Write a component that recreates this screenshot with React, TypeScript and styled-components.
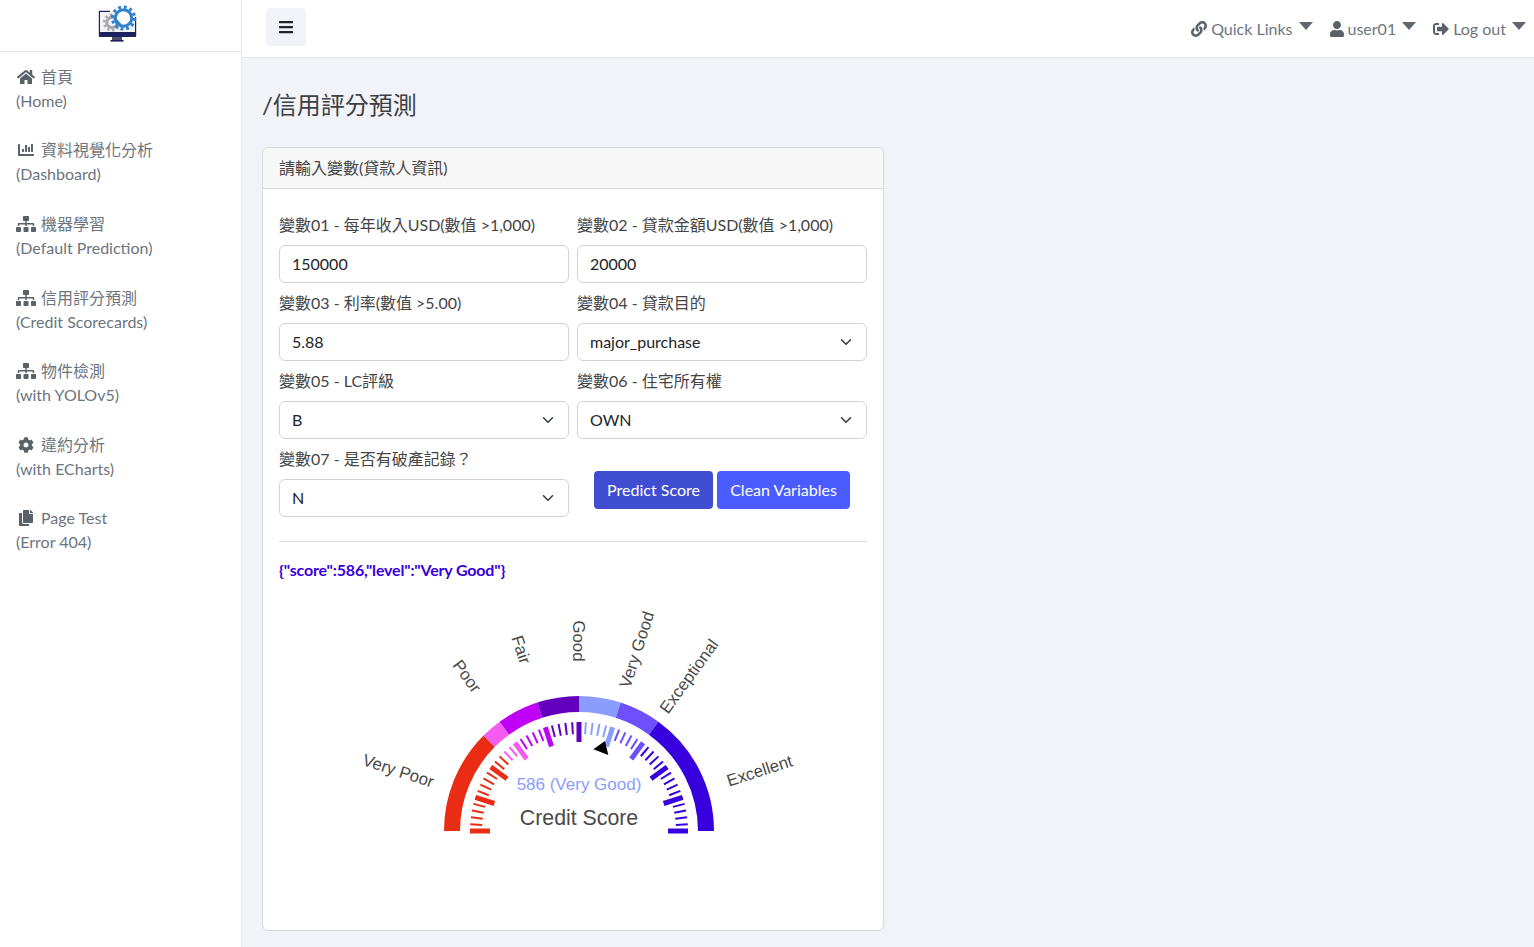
import React from "react";
import styled, { createGlobalStyle } from "styled-components";
import {
    FaBars,
    FaChartBar,
    FaCog,
    FaCopy,
    FaHome,
    FaLink,
    FaSignOutAlt,
    FaSitemap,
    FaUser,
} from "react-icons/fa";

const GlobalStyle = createGlobalStyle`
    * {
        box-sizing: border-box;
    }
    html, body {
        margin: 0;
        padding: 0;
        overflow: hidden;
    }
    body {
        background: #f1f3f9;
        color: #444;
        font-family: Lato, "Noto Sans CJK TC", sans-serif;
        font-size: 16px;
        line-height: 24px;
    }
`;

const navItems = [
    { icon: <FaHome />, title: "首頁", sub: "(Home)" },
    { icon: <FaChartBar />, title: "資料視覺化分析", sub: "(Dashboard)" },
    { icon: <FaSitemap />, title: "機器學習", sub: "(Default Prediction)" },
    { icon: <FaSitemap />, title: "信用評分預測", sub: "(Credit Scorecards)" },
    { icon: <FaSitemap />, title: "物件檢測", sub: "(with YOLOv5)" },
    { icon: <FaCog />, title: "違約分析", sub: "(with ECharts)" },
    { icon: <FaCopy />, title: "Page Test", sub: "(Error 404)" },
];

// gauge segments: upper end as share of the half circle, and its colour
const segments = [
    { stop: 0.25, color: "#ea2c14" },
    { stop: 0.3, color: "#f45cf2" },
    { stop: 0.4, color: "#c000f6" },
    { stop: 0.5, color: "#6200bd" },
    { stop: 0.6, color: "#8a9dfc" },
    { stop: 0.7, color: "#6d50fb" },
    { stop: 1, color: "#3700dd" },
];

const gaugeLabels = [
    { text: "Very Poor", x: 119, y: 182, angle: 18 },
    { text: "Poor", x: 187, y: 87, angle: 54 },
    { text: "Fair", x: 241, y: 60, angle: 72 },
    { text: "Good", x: 298, y: 51, angle: 90 },
    { text: "Very Good", x: 359, y: 60, angle: -72 },
    { text: "Exceptional", x: 411, y: 87, angle: -54 },
    { text: "Excellent", x: 481, y: 182, angle: -18 },
];

const CX = 300;
const CY = 241;

const polar = (share: number, radius: number) => {
    const a = Math.PI * (1 - share);
    return { x: CX + radius * Math.cos(a), y: CY - radius * Math.sin(a) };
};

const arcPath = (from: number, to: number, outer: number, inner: number) => {
    const a = polar(from, outer);
    const b = polar(to, outer);
    const c = polar(to, inner);
    const d = polar(from, inner);
    return `M${a.x} ${a.y}A${outer} ${outer} 0 0 1 ${b.x} ${b.y}L${c.x} ${c.y}A${inner} ${inner} 0 0 0 ${d.x} ${d.y}Z`;
};

const colorAt = (share: number) =>
    segments.find((s) => share <= s.stop + 0.0001)?.color ?? "#3700dd";

const Gauge: React.FC = () => {
    const ticks = Array.from({ length: 51 }, (_, i) => i);

    return (
        <GaugeSvg viewBox='0 0 588 325'>
            {segments.map((s, i) => (
                <path
                    key={s.color}
                    d={arcPath(i === 0 ? 0 : segments[i - 1].stop, s.stop, 135, 119)}
                    fill={s.color}
                />
            ))}
            {ticks.map((i) => {
                const share = i / 50;
                const major = i % 5 === 0;
                const a = polar(share, 109);
                const b = polar(share, major ? 89 : 97);
                return (
                    <line
                        key={i}
                        x1={a.x}
                        y1={a.y}
                        x2={b.x}
                        y2={b.y}
                        stroke={colorAt(share)}
                        strokeWidth={major ? 5 : 2}
                    />
                );
            })}
            <polygon points='326,151 314.3,159.3 329.3,165' fill='#000' />
            {gaugeLabels.map((l) => (
                <GaugeLabel
                    key={l.text}
                    transform={`translate(${l.x} ${l.y}) rotate(${l.angle})`}
                >
                    {l.text}
                </GaugeLabel>
            ))}
            <GaugeValue x={CX} y={200}>
                586 (Very Good)
            </GaugeValue>
            <GaugeTitle x={CX} y={235}>
                Credit Score
            </GaugeTitle>
        </GaugeSvg>
    );
};

const Logo: React.FC = () => (
    <svg width='40' height='40' viewBox='0 0 40 40'>
        <path d='M2.5 33V8.5H13M38.5 14V33' fill='none' stroke='#1c2260' strokeWidth='1.4' />
        <rect x='3' y='9' width='35' height='21' fill='#f3f3f6' />
        <rect x='2' y='29' width='37' height='5' fill='#1c2260' />
        <rect x='15' y='34' width='10' height='3' fill='#4a4f68' />
        <rect x='13.5' y='37' width='13' height='1.6' fill='#1c2260' />
        <circle cx='15' cy='19.5' r='5.2' fill='none' stroke='#a8a8ac' strokeWidth='3.2' />
        <circle cx='15' cy='19.5' r='7.8' fill='none' stroke='#a8a8ac' strokeWidth='2.6' strokeDasharray='2.4 2.5' />
        <circle cx='26.5' cy='15' r='8.2' fill='#fff' />
        <circle cx='26.5' cy='15' r='8.2' fill='none' stroke='#2e80cc' strokeWidth='3' />
        <circle cx='26.5' cy='15' r='11' fill='none' stroke='#2e80cc' strokeWidth='3.2' strokeDasharray='2.9 2.86' />
        <path d='M18 16c2 1 3 4 6 6' fill='none' stroke='#2e80cc' strokeWidth='2' />
    </svg>
);

const App: React.FC = () => (
    <Page>
        <GlobalStyle />
        <Sidebar>
            <Brand>
                <Logo />
            </Brand>
            <NavList>
                {navItems.map((item) => (
                    <NavItem key={item.sub}>
                        <NavTitle>
                            <NavIcon>{item.icon}</NavIcon>
                            {item.title}
                        </NavTitle>
                        <span>{item.sub}</span>
                    </NavItem>
                ))}
            </NavList>
        </Sidebar>
        <Main>
            <Topbar>
                <MenuButton>
                    <FaBars />
                </MenuButton>
                <TopLinks>
                    <TopLink>
                        <TopIcon $width={16}>
                            <FaLink />
                        </TopIcon>
                        Quick Links
                        <Caret />
                    </TopLink>
                    <TopLink>
                        <TopIcon $width={14}>
                            <FaUser />
                        </TopIcon>
                        user01
                        <Caret />
                    </TopLink>
                    <TopLink>
                        <TopIcon $width={16}>
                            <FaSignOutAlt />
                        </TopIcon>
                        Log out
                        <Caret />
                    </TopLink>
                </TopLinks>
            </Topbar>
            <Content>
                <PageTitle>/信用評分預測</PageTitle>
                <Card>
                    <CardHeader>請輸入變數(貸款人資訊)</CardHeader>
                    <CardBody>
                        <FormGrid>
                            <Field>
                                <Label>變數01 - 每年收入USD(數值 &gt;1,000)</Label>
                                <Input defaultValue='150000' />
                            </Field>
                            <Field>
                                <Label>變數02 - 貸款金額USD(數值 &gt;1,000)</Label>
                                <Input defaultValue='20000' />
                            </Field>
                            <Field>
                                <Label>變數03 - 利率(數值 &gt;5.00)</Label>
                                <Input defaultValue='5.88' />
                            </Field>
                            <Field>
                                <Label>變數04 - 貸款目的</Label>
                                <Select defaultValue='major_purchase'>
                                    <option>major_purchase</option>
                                </Select>
                            </Field>
                            <Field>
                                <Label>變數05 - LC評級</Label>
                                <Select defaultValue='B'>
                                    <option>B</option>
                                </Select>
                            </Field>
                            <Field>
                                <Label>變數06 - 住宅所有權</Label>
                                <Select defaultValue='OWN'>
                                    <option>OWN</option>
                                </Select>
                            </Field>
                            <Field>
                                <Label>變數07 - 是否有破產記錄？</Label>
                                <Select defaultValue='N'>
                                    <option>N</option>
                                </Select>
                            </Field>
                            <Actions>
                                <Button $dark>Predict Score</Button>
                                <Button>Clean Variables</Button>
                            </Actions>
                        </FormGrid>
                        <Divider />
                        <ResultText>{'{"score":586,"level":"Very Good"}'}</ResultText>
                        <Gauge />
                    </CardBody>
                </Card>
            </Content>
        </Main>
    </Page>
);

export default App;

const Page = styled.div`
    display: flex;
    height: 947px;
    overflow: hidden;
`;

const Sidebar = styled.aside`
    flex: 0 0 242px;
    background: #fff;
    border-right: 1px solid #e3e6ee;
`;

const Brand = styled.div`
    height: 52px;
    display: flex;
    justify-content: center;
    align-items: flex-start;
    padding-top: 3px;
    padding-right: 8px;
    border-bottom: 1px solid #e3e6ee;
`;

const NavList = styled.nav`
    display: flex;
    flex-direction: column;
    padding-top: 13px;
`;

const NavItem = styled.a`
    display: flex;
    flex-direction: column;
    height: 73.5px;
    padding-left: 16px;
    color: #6c757d;

    &:nth-child(1) {
        height: 73px;
    }
    &:nth-child(2) {
        height: 74px;
    }
`;

const NavTitle = styled.span`
    display: flex;
    align-items: center;
`;

const NavIcon = styled.span`
    display: flex;
    justify-content: center;
    width: 20px;
    margin-right: 5px;
    color: #5a6169;

    svg {
        width: 20px;
        height: 16px;
    }
`;

const Main = styled.div`
    flex: 1;
    min-width: 0;
`;

const Topbar = styled.header`
    height: 58px;
    display: flex;
    justify-content: space-between;
    padding: 8px 8px 0 24px;
    background: #fff;
    border-bottom: 1px solid #e3e6ee;
`;

const MenuButton = styled.button`
    width: 40px;
    height: 38px;
    display: flex;
    align-items: center;
    justify-content: center;
    border: 0;
    border-radius: 4px;
    background: #f1f3f8;
    color: #212529;
    font-size: 16px;
`;

const TopLinks = styled.div`
    display: flex;
    gap: 17px;
    padding-top: 9px;
`;

const TopLink = styled.a`
    display: flex;
    align-items: flex-start;
    gap: 4px;
    color: #6c757d;
`;

const TopIcon = styled.span<{ $width: number }>`
    display: flex;
    margin-top: 4px;
    color: #5a6169;

    svg {
        width: ${(p) => p.$width}px;
        height: 16px;
    }
`;

const Caret = styled.span`
    width: 0;
    height: 0;
    margin: 5px 0 0 2px;
    border-left: 7.5px solid transparent;
    border-right: 7.5px solid transparent;
    border-top: 8px solid #5f666e;
`;

const Content = styled.main`
    padding: 30px 20px 16px;
`;

const PageTitle = styled.h1`
    margin: 0 0 24px;
    height: 35px;
    font-size: 24px;
    line-height: 34px;
    font-weight: 400;
    color: #3d3f45;
`;

const Card = styled.section`
    width: 622px;
    height: 784px;
    background: #fff;
    border: 1px solid #d8d9df;
    border-radius: 6px;
    overflow: hidden;
`;

const CardHeader = styled.div`
    height: 41px;
    padding: 8px 16px;
    background: #f7f7f7;
    border-bottom: 1px solid #d8d9df;
`;

const CardBody = styled.div`
    padding: 24px 16px 0;
`;

const FormGrid = styled.div`
    display: grid;
    grid-template-columns: 290px 290px;
    column-gap: 8px;
    row-gap: 8px;
`;

const Field = styled.div`
    display: flex;
    flex-direction: column;
`;

const Label = styled.label`
    height: 24px;
    margin-bottom: 8px;
`;

const controlStyles = `
    width: 100%;
    height: 38px;
    padding: 6px 12px;
    background-color: #fff;
    border: 1px solid #ced4da;
    border-radius: 6px;
    color: #212529;
    font-family: Lato, "Noto Sans CJK TC", sans-serif;
    font-size: 16px;
    line-height: 24px;
`;

const Input = styled.input`
    ${controlStyles}
    padding: 4px 12px 6px;
`;

const Select = styled.select`
    ${controlStyles}
    appearance: none;
    padding-right: 36px;
    background-image: url("data:image/svg+xml,%3csvg xmlns='http://www.w3.org/2000/svg' viewBox='0 0 16 16'%3e%3cpath fill='none' stroke='%23343a40' stroke-linecap='round' stroke-linejoin='round' stroke-width='2' d='m2 5 6 6 6-6'/%3e%3c/svg%3e");
    background-repeat: no-repeat;
    background-position: right 12px center;
    background-size: 16px 12px;
`;

const Actions = styled.div`
    display: flex;
    align-items: flex-start;
    gap: 4px;
    padding: 24px 0 0 17px;
`;

const Button = styled.button<{ $dark?: boolean }>`
    height: 38px;
    min-width: ${(p) => (p.$dark ? "119px" : "133px")};
    padding: 6px 12px;
    border: 0;
    border-radius: 4px;
    background: ${(p) => (p.$dark ? "#3f4ed0" : "#4a5cff")};
    color: #fff;
    font-family: Lato, sans-serif;
    font-size: 16px;
    line-height: 24px;
`;

const Divider = styled.hr`
    height: 1px;
    margin: 24px 0 16px;
    border: 0;
    background: #dcdde1;
`;

const ResultText = styled.div`
    height: 24px;
    color: #3700dd;
    font-weight: 700;
    letter-spacing: -0.17px;
`;

const GaugeSvg = styled.svg`
    display: block;
    width: 588px;
    height: 325px;
    margin-top: 8px;
    font-family: "Liberation Sans", Arial, sans-serif;
`;

const GaugeLabel = styled.text`
    fill: #4a4a4a;
    font-size: 16.8px;
    text-anchor: middle;
    dominant-baseline: middle;
`;

const GaugeValue = styled.text`
    fill: #8a9dfc;
    font-size: 17px;
    text-anchor: middle;
`;

const GaugeTitle = styled.text`
    fill: #4a4a4a;
    font-size: 21.3px;
    text-anchor: middle;
`;
